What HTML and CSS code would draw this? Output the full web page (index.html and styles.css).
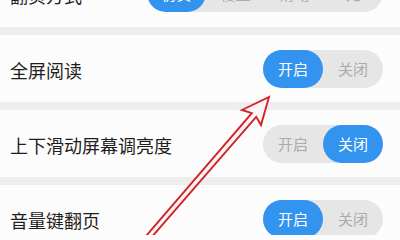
FILE: index.html
```html
<!DOCTYPE html>
<html lang="zh-CN">
<head>
<meta charset="utf-8">
<link rel="stylesheet" href="styles.css">
</head>
<body>
<div class="screen">
  <div class="list">
    <div class="row">
      <span class="label">翻页方式</span>
      <div class="toggle wide">
        <span class="seg on">仿真</span>
        <span class="seg">覆盖</span>
        <span class="seg">滑动</span>
        <span class="seg">无</span>
      </div>
    </div>
    <div class="sep"></div>
    <div class="row">
      <span class="label">全屏阅读</span>
      <div class="toggle">
        <span class="seg on">开启</span>
        <span class="seg">关闭</span>
      </div>
    </div>
    <div class="sep"></div>
    <div class="row">
      <span class="label">上下滑动屏幕调亮度</span>
      <div class="toggle">
        <span class="seg">开启</span>
        <span class="seg on">关闭</span>
      </div>
    </div>
    <div class="sep"></div>
    <div class="row">
      <span class="label">音量键翻页</span>
      <div class="toggle">
        <span class="seg on">开启</span>
        <span class="seg">关闭</span>
      </div>
    </div>
  </div>
  <svg class="arrow" width="400" height="235" viewBox="0 0 400 235">
    <polygon points="269,97 261,125 256.2,116.8 146.9,242.6 143.1,239.4 251.8,113.2 242,110" fill="#fff4f4" stroke="#cf2428" stroke-width="1.9" stroke-linejoin="miter"/>
  </svg>
</div>
</body>
</html>
```
FILE: styles.css
```css
html, body {
  margin: 0;
  padding: 0;
  background: #fcfcfc;
}
.screen {
  position: relative;
  width: 400px;
  height: 235px;
  overflow: hidden;
  font-family: "Noto Sans CJK SC", "Noto Sans", sans-serif;
}
.list {
  margin-top: -41px;
  display: flex;
  flex-direction: column;
}
.row {
  height: 67px;
  background: #fcfcfc;
  display: flex;
  align-items: center;
  justify-content: space-between;
  padding: 0 17px 0 10px;
}
.row:first-child {
  height: 68px;
}
.label {
  font-size: 18px;
  color: #1e1e1e;
  line-height: 18px;
  margin-top: 3px;
}
.sep {
  height: 8px;
  background: #eeeeee;
}
.toggle {
  display: flex;
  height: 38px;
  border-radius: 19px;
  background: #e6e6e6;
}
.seg {
  width: 60px;
  height: 38px;
  border-radius: 19px;
  display: flex;
  align-items: center;
  justify-content: center;
  font-size: 15px;
  color: #ababab;
}
.wide .seg {
  width: 59px;
}
.seg.on {
  background: #3294ef;
  color: #ffffff;
}
.arrow {
  position: absolute;
  left: 0;
  top: 0;
  pointer-events: none;
}
```
